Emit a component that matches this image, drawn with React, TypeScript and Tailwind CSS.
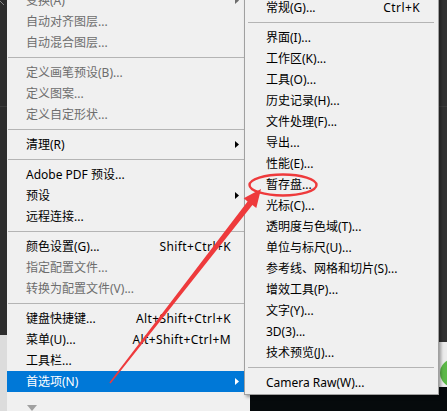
type Item =
  | "sep"
  | {
      label: string;
      shortcut?: string;
      disabled?: boolean;
      sub?: boolean;
      active?: boolean;
    };

const leftItems: Item[] = [
  { label: "变换(A)", disabled: true, sub: true },
  { label: "自动对齐图层...", disabled: true },
  { label: "自动混合图层...", disabled: true },
  "sep",
  { label: "定义画笔预设(B)...", disabled: true },
  { label: "定义图案...", disabled: true },
  { label: "定义自定形状...", disabled: true },
  "sep",
  { label: "清理(R)", sub: true },
  "sep",
  { label: "Adobe PDF 预设..." },
  { label: "预设", sub: true },
  { label: "远程连接..." },
  "sep",
  { label: "颜色设置(G)...", shortcut: "Shift+Ctrl+K" },
  { label: "指定配置文件...", disabled: true },
  { label: "转换为配置文件(V)...", disabled: true },
  "sep",
  { label: "键盘快捷键...", shortcut: "Alt+Shift+Ctrl+K" },
  { label: "菜单(U)...", shortcut: "Alt+Shift+Ctrl+M" },
  { label: "工具栏..." },
  { label: "首选项(N)", sub: true, active: true },
];

const subItems: Item[] = [
  { label: "常规(G)...", shortcut: "Ctrl+K" },
  "sep",
  { label: "界面(I)..." },
  { label: "工作区(K)..." },
  { label: "工具(O)..." },
  { label: "历史记录(H)..." },
  { label: "文件处理(F)..." },
  { label: "导出..." },
  { label: "性能(E)..." },
  { label: "暂存盘..." },
  { label: "光标(C)..." },
  { label: "透明度与色域(T)..." },
  { label: "单位与标尺(U)..." },
  { label: "参考线、网格和切片(S)..." },
  { label: "增效工具(P)..." },
  { label: "文字(Y)..." },
  { label: "3D(3)..." },
  { label: "技术预览(J)..." },
  "sep",
  { label: "Camera Raw(W)..." },
];

const font = "font-['Noto_Sans','Noto_Sans_CJK_SC',sans-serif]";

function SubArrow({ color }: { color: string }) {
  return (
    <svg width="4" height="7" viewBox="0 0 4 7" className="shrink-0">
      <path d="M0 0 L4 3.5 L0 7 Z" fill={color} />
    </svg>
  );
}

function LeftRow({ item }: { item: Item }) {
  if (item === "sep") {
    return (
      <div className="h-[9px] pt-[4px] pl-[1px]">
        <div className="h-px bg-[#b4b4b4]" />
      </div>
    );
  }
  const text = item.active
    ? "text-white"
    : item.disabled
      ? "text-[#6d6d6d]"
      : "text-black";
  return (
    <div
      className={`flex h-[21px] shrink-0 items-center pl-[19px] whitespace-nowrap ${text} ${
        item.active ? "bg-[#0078d7]" : ""
      }`}
    >
      <span>{item.label}</span>
      {item.shortcut && (
        <span className="ml-auto mr-[19px] tracking-[0.4px]">{item.shortcut}</span>
      )}
      {item.sub && (
        <span className="ml-auto mr-[11px] flex">
          <SubArrow color={item.active ? "#ffffff" : item.disabled ? "#6d6d6d" : "#000000"} />
        </span>
      )}
    </div>
  );
}

function SubRow({ item }: { item: Item }) {
  if (item === "sep") {
    return (
      <div className="h-[9px] pt-[4px] pl-[2px] pr-[3px]">
        <div className="h-px bg-[#b4b4b4]" />
      </div>
    );
  }
  return (
    <div className="flex h-[21px] items-center pl-[20px] text-black whitespace-nowrap">
      <span>{item.label}</span>
      {item.shortcut && (
        <span className="ml-auto mr-[17px] tracking-[0.4px]">{item.shortcut}</span>
      )}
    </div>
  );
}

export default function App() {
  return (
    <div className={`relative flex h-[411px] w-[447px] overflow-hidden bg-[#060a0c] text-[12px] leading-none ${font}`}>
      {/* left background strip */}
      <div className="flex w-[7px] shrink-0 flex-col">
        <div className="relative h-[335px] bg-[#2d2d2d]">
          <div className="absolute left-0 right-0 top-[106px] h-px bg-[#3c3c3c]" />
          <svg width="7" height="8" className="absolute left-0 top-0">
            <path d="M0 1 L4 5" stroke="#8a8a8a" strokeWidth="1" />
          </svg>
        </div>
        <div className="flex-1 bg-[#dcdcdc]" />
      </div>

      {/* main menu */}
      <div className="flex w-[243px] shrink-0 flex-col bg-[#f0f0f0]">
        <div className="-mt-[10px] flex flex-col">
          {leftItems.map((item, i) => (
            <LeftRow key={i} item={item} />
          ))}
        </div>
        <div className="pl-[20px] pt-[13px]">
          <svg width="10" height="6" viewBox="0 0 10 6">
            <path d="M0 0 L10 0 L5 6 Z" fill="#a0a0a0" />
          </svg>
        </div>
      </div>

      {/* right background */}
      <div className="flex flex-1 flex-col">
        <div className="relative h-[342px] bg-[#323232]">
          <div className="absolute left-0 right-0 top-[106px] h-px bg-[#3e3e3e]" />
        </div>
        <div className="relative h-[45px] overflow-hidden bg-[#ececec]">
          <div className="absolute left-[190px] top-[17px] h-[28px] w-[28px] rounded-full bg-[#5cb848]" />
        </div>
        <div className="flex-1 bg-[#060a0c]" />
      </div>

      {/* submenu */}
      <div className="absolute left-[244px] top-[-5px] w-[195px] border border-[#a0a0a0] bg-[#f0f0f0] p-px shadow-[2px_2px_3px_rgba(0,0,0,0.35)]">
        {subItems.map((item, i) => (
          <SubRow key={i} item={item} />
        ))}
      </div>

      {/* red annotation */}
      <svg
        width="447"
        height="411"
        viewBox="0 0 447 411"
        className="pointer-events-none absolute left-0 top-0"
      >
        <ellipse cx="283" cy="185" rx="33.5" ry="10.5" fill="none" stroke="#ee3a3c" strokeWidth="2.4" />
        <polygon
          points="110.6,383.5 109.4,382.5 247.6,201.4 243.7,198.3 261,189 256.3,208.1 252.4,205"
          fill="#ee3a3c"
        />
      </svg>
    </div>
  );
}
